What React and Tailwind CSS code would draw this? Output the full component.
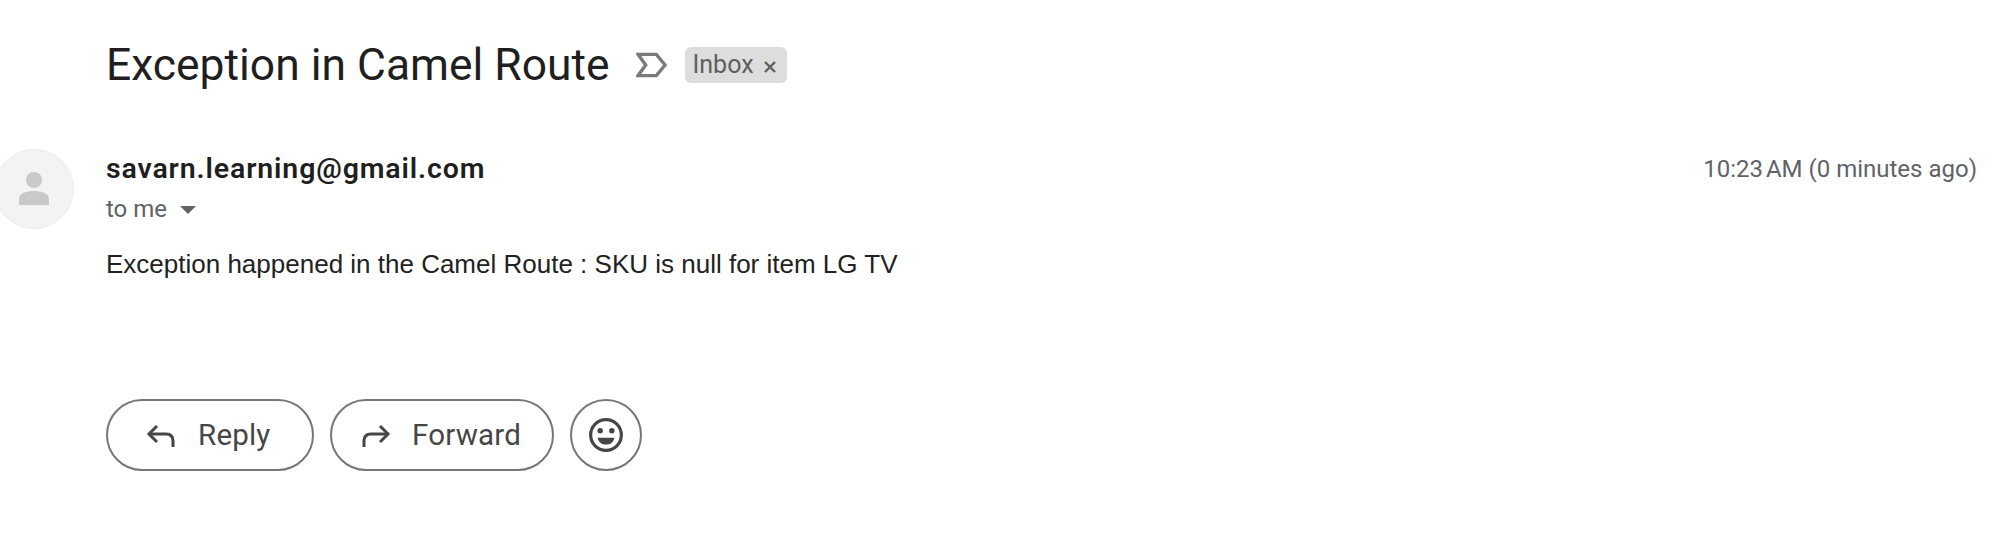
const google = { fontFamily: 'Roboto, sans-serif' };

function ReplyIcon({ flip }) {
  return (
    <svg width="32" height="32" viewBox="0 0 32 32" fill="none" stroke="#444746" strokeWidth="3" className={flip ? '-scale-x-100' : ''}>
      <path d="M12 7 L4 15 L12 23" />
      <path d="M4 15 H21 Q28 15 28 22 V28" />
    </svg>
  );
}

function PillButton({ label, flip, className, labelClass }) {
  return (
    <button className={`flex h-[72px] items-center rounded-full border-2 border-[#747775] text-[29.5px] text-[#444746] ${className}`}>
      <ReplyIcon flip={flip} />
      <span className={`tracking-[0.2px] ${labelClass}`}>{label}</span>
    </button>
  );
}

export default function App() {
  return (
    <div className="h-[548px] w-[1996px] overflow-hidden bg-white pl-[106px] pr-[19px]" style={google}>
      <div className="flex h-[130px] items-center">
        <h1 className="mt-[1px] text-[44.4px] font-normal text-[#1f1f1f]">Exception in Camel Route</h1>
        <svg width="31" height="26" viewBox="0 0 32 26" fill="none" stroke="#7a7a7a" strokeWidth="3.5" className="ml-[26px]">
          <path d="M2 2 H21 L30 13 L21 24 H2 L10 13 Z" />
        </svg>
        <div className="ml-[18px] flex h-[36px] w-[102px] items-center rounded-[6px] bg-[#dddddd] pl-[8px] text-[25px] text-[#5f5f5f]">
          Inbox
          <svg width="14" height="14" viewBox="0 0 14 14" stroke="#5f5f5f" strokeWidth="2.4" className="ml-[9px] mt-[3px]">
            <path d="M2 2 L12 12 M12 2 L2 12" />
          </svg>
        </div>
      </div>

      <div className="relative">
        <div className="absolute left-[-112px] top-[19px] flex h-[80px] w-[80px] items-center justify-center rounded-full border border-[#ececec] bg-[#f3f3f3]">
          <svg width="32" height="34" viewBox="0 0 32 34" fill="#c9c9c9">
            <circle cx="16" cy="8" r="8" />
            <path d="M1 33 V27 C1 21 9 19 16 19 C23 19 31 21 31 27 V33 Z" />
          </svg>
        </div>
        <div className="flex items-center justify-between pt-[21px]">
          <span className="text-[28.5px] font-semibold leading-[36px] tracking-[0.87px] text-[#1f1f1f]">savarn.learning@gmail.com</span>
          <span className="text-[24px] leading-[36px] text-[#5f6368]">10:23{'\u202f'}AM (0 minutes ago)</span>
        </div>
        <div className="mt-[4px] flex h-[36px] items-center text-[24px] text-[#5f6368]">
          to me
          <svg width="16" height="8" viewBox="0 0 16 8" fill="#5f6368" className="ml-[13px] mt-[2px]">
            <path d="M0 0 H16 L8 8 Z" />
          </svg>
        </div>
        <p className="mt-[19px] text-[26px] leading-[36px] text-[#222222]" style={{ fontFamily: '"Liberation Sans", sans-serif' }}>
          Exception happened in the Camel Route : SKU is null for item LG TV
        </p>
      </div>

      <div className="mt-[117px] flex gap-[16px]">
        <PillButton label="Reply" className="w-[208px] pl-[37px]" labelClass="ml-[21px]" />
        <PillButton label="Forward" flip className="w-[224px] pl-[28px]" labelClass="ml-[20px]" />
        <button className="flex h-[72px] w-[72px] items-center justify-center rounded-full border-2 border-[#747775]">
          <svg width="36" height="36" viewBox="0 0 34 34" fill="none">
            <circle cx="17" cy="17" r="14.5" stroke="#444746" strokeWidth="3" />
            <circle cx="11.5" cy="13" r="2.6" fill="#444746" />
            <circle cx="22.5" cy="13" r="2.6" fill="#444746" />
            <path d="M9 19.5 H25 C24 24 21 26 17 26 C13 26 10 24 9 19.5 Z" fill="#444746" />
          </svg>
        </button>
      </div>
    </div>
  );
}
